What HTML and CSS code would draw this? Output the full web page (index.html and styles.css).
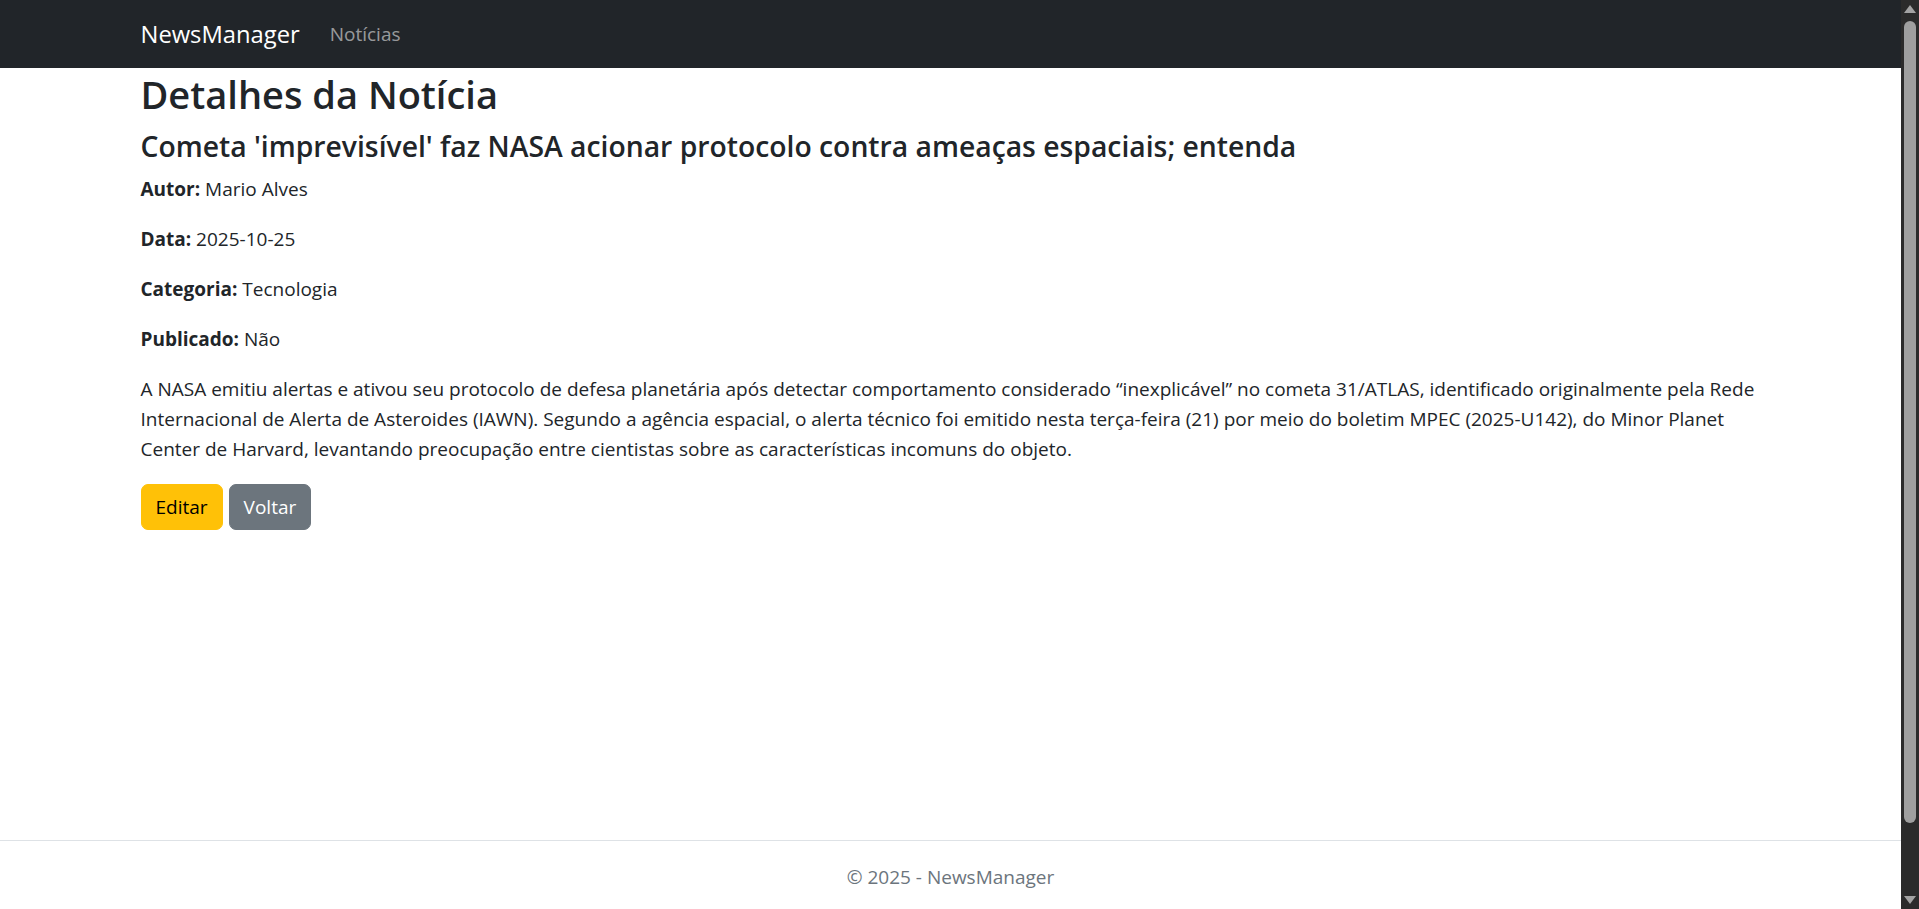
FILE: index.html
```html
<!DOCTYPE html>
<html lang="pt-br">
<head>
<meta charset="utf-8">
<title>Detalhes da Notícia - NewsManager</title>
<link rel="stylesheet" href="styles.css">
</head>
<body>
<header>
  <nav class="navbar">
    <div class="container nav-inner">
      <a class="brand" href="#">NewsManager</a>
      <a class="nav-link" href="#">Notícias</a>
    </div>
  </nav>
</header>
<div class="container grow">
  <main class="main">
    <h1 class="title">Detalhes da Notícia</h1>
    <h2 class="subtitle">Cometa 'imprevisível' faz NASA acionar protocolo contra ameaças espaciais; entenda</h2>
    <p class="field"><strong>Autor:</strong> Mario Alves</p>
    <p class="field"><strong>Data:</strong> 2025-10-25</p>
    <p class="field"><strong>Categoria:</strong> Tecnologia</p>
    <p class="field"><strong>Publicado:</strong> Não</p>
    <p class="content">A NASA emitiu alertas e ativou seu protocolo de defesa planetária após detectar comportamento considerado “inexplicável” no cometa 31/ATLAS, identificado originalmente pela Rede Internacional de Alerta de Asteroides (IAWN). Segundo a agência espacial, o alerta técnico foi emitido nesta terça-feira (21) por meio do boletim MPEC (2025-U142), do Minor Planet Center de Harvard, levantando preocupação entre cientistas sobre as características incomuns do objeto.</p>
    <div class="actions">
      <a class="btn btn-warning" href="#">Editar</a>
      <a class="btn btn-secondary" href="#">Voltar</a>
    </div>
  </main>
</div>
<footer class="footer">
  <div class="container footer-inner">© 2025 - NewsManager</div>
</footer>
<div class="scrollbar" aria-hidden="true">
  <span class="arrow arrow-up"></span>
  <span class="thumb"></span>
  <span class="arrow arrow-down"></span>
</div>
</body>
</html>
```
FILE: styles.css
```css
* {
  box-sizing: border-box;
}
html {
  height: 100%;
}
body {
  margin: 0;
  padding-right: 18px;
  min-height: 100vh;
  display: flex;
  flex-direction: column;
  font-family: "Open Sans", "Noto Sans", "Liberation Sans", sans-serif;
  font-size: 19px;
  line-height: 30px;
  color: #212529;
  background: #fff;
  overflow: hidden;
}
a {
  text-decoration: none;
}
.container {
  width: 100%;
  max-width: 1650px;
  padding: 0 15px;
  margin: 0 auto;
}
.grow {
  flex: 1 0 auto;
}
.navbar {
  background: #212529;
  height: 68px;
  display: flex;
  align-items: center;
  margin-right: -18px;
  padding-right: 18px;
}
.nav-inner {
  display: flex;
  align-items: center;
}
.brand {
  color: #fff;
  font-size: 23.75px;
  line-height: 37px;
  margin-right: 20px;
}
.nav-link {
  color: rgba(255, 255, 255, 0.55);
  font-size: 19px;
  line-height: 30px;
  padding: 0 10px;
}
.main {
  padding-top: 2px;
  padding-bottom: 20px;
}
.title {
  margin: 0 0 10px 0;
  font-size: 38px;
  line-height: 48px;
  font-weight: 600;
}
.subtitle {
  margin: 0 0 10px 0;
  font-size: 28.3px;
  line-height: 36px;
  font-weight: 600;
}
.field,
.content {
  margin: 0 0 20px 0;
}
.field strong {
  font-weight: 700;
}
.actions {
  display: flex;
  gap: 6px;
}
.btn {
  display: inline-block;
  font-size: 19px;
  line-height: 30px;
  padding: 7px 14px;
  border-radius: 7px;
  border: 1px solid transparent;
}
.btn-warning {
  background: #ffc107;
  border-color: #ffc107;
  color: #000;
}
.btn-secondary {
  background: #6c757d;
  border-color: #6c757d;
  color: #fff;
}
.footer {
  flex: none;
  height: 69px;
  border-top: 1px solid #dee2e6;
  line-height: 73px;
  white-space: nowrap;
  color: #6c757d;
  overflow: hidden;
}
.footer-inner {
  text-align: center;
}
.scrollbar {
  position: fixed;
  top: 0;
  right: 0;
  width: 18px;
  height: 100%;
  background: #2b2b2b;
}
.thumb {
  position: absolute;
  left: 3px;
  right: 3px;
  top: 21px;
  height: 802px;
  background: #9f9f9f;
  border-radius: 6px;
}
.arrow {
  position: absolute;
  left: 3px;
  width: 0;
  height: 0;
  border-left: 6px solid transparent;
  border-right: 6px solid transparent;
}
.arrow-up {
  top: 5px;
  border-bottom: 8px solid #a3a3a3;
}
.arrow-down {
  bottom: 5px;
  border-top: 8px solid #a3a3a3;
}
```
